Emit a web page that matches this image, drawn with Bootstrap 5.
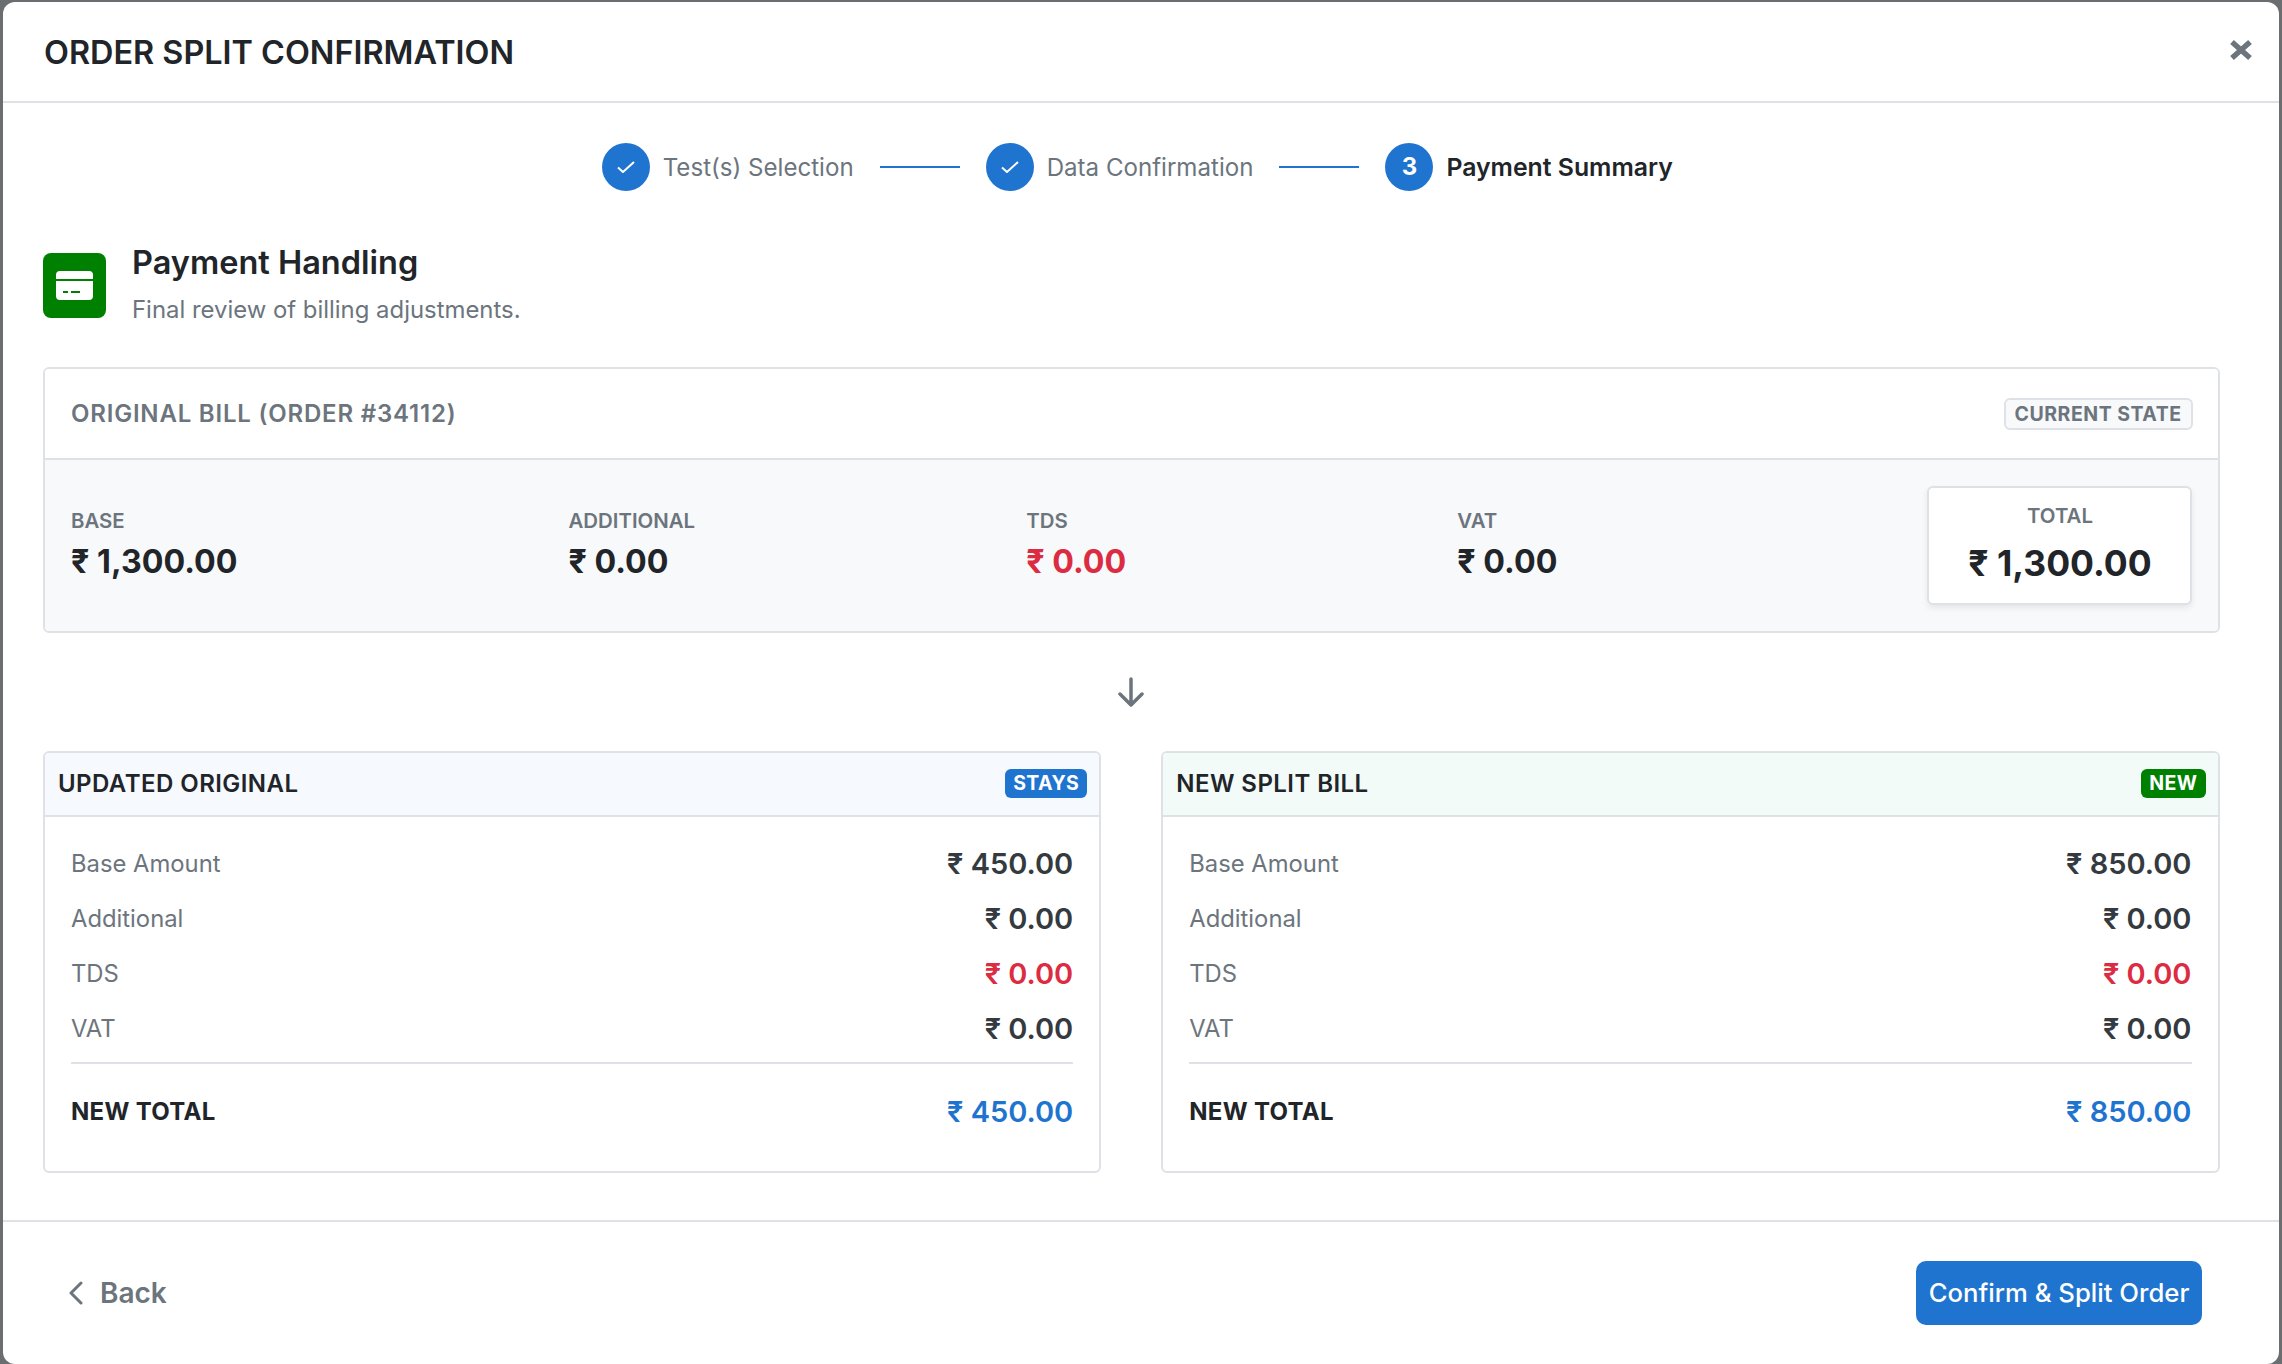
<!DOCTYPE html>
<html lang="en">
<head>
    <meta charset="UTF-8">
    <title>Order Split Confirmation</title>
    <link href="https://cdn.jsdelivr.net/npm/bootstrap@5.3.0/dist/css/bootstrap.min.css" rel="stylesheet">
    <style>
        html, body { height: 100%; }
        body { background: #6b6e71; font-family: Inter, "Liberation Sans", sans-serif; color: #212529; overflow: hidden; padding: 2px 3px 0; }
        .split-modal { height: 1362px; border: 0; border-radius: 12px; background: #fff; }
        .split-modal .modal-header { height: 101px; padding: 3px 26px 0 41px; border-bottom: 2px solid #dee2e6; }
        .split-title { font-size: 32.4px; font-weight: 600; margin: 0; }
        .split-x { width: 24px; height: 24px; color: #6c757d; margin-top: -6px; }
        .split-modal .modal-body { padding: 40px 59.5px 47px 40px; }

        .step-row { height: 48px; margin-bottom: 62px; padding-left: 12px; }
        .step-dot { width: 48px; height: 48px; border-radius: 50%; background: #1f74cf; color: #fff; font-size: 24px; font-weight: 700; }
        .step-text { font-size: 24.1px; color: #6c757d; margin: 2px 0 0 13px; }
        .step-now { color: #212529; font-weight: 600; font-size: 24.8px; }
        .step-line { width: 80px; height: 2px; background: #1f74cf; margin: 0 26px; }

        .pay-icon { width: 63px; height: 65px; background: #008000; border-radius: 8px; margin-right: 26px; }
        .pay-title { font-size: 32.5px; font-weight: 600; line-height: 38px; margin: -9px 0 0; }
        .pay-sub { font-size: 23.9px; color: #6c757d; line-height: 32px; margin: 12px 0 0; }
        .pay-head { height: 65px; margin-bottom: 49px; }

        .bill-card { border: 2px solid #dee2e6; border-radius: 6px; --bs-card-inner-border-radius: 4px; }
        .bill-card .card-header { border-bottom: 2px solid #dee2e6; }
        .orig-head { height: 91px; padding: 0 25px 0 26px; background: #fff; }
        .orig-name { font-size: 24px; font-weight: 600; letter-spacing: .8px; color: #6c757d; }
        .state-tag { font-size: 19.5px; font-weight: 700; letter-spacing: .5px; color: #6c757d; background: #f8f9fa; border: 2px solid #dee2e6; border-radius: 6px; padding: 0 9px; height: 32px; line-height: 28px; }
        .orig-body { height: 170.5px; padding: 0 25px 0 26px; background: #f8f9fa; border-radius: 0 0 4px 4px; }
        .fig-label { font-size: 20.4px; font-weight: 600; color: #6c757d; line-height: 24px; }
        .fig-value { font-size: 32.2px; font-weight: 700; line-height: 40px; margin-top: 9px; }
        .total-box { width: 265px; height: 119px; padding-bottom: 2px; background: #fff; border: 2px solid #dee2e6; border-radius: 6px; box-shadow: 0 3px 6px rgba(0,0,0,.08); margin-left: 39px; }
        .total-box .fig-value { font-size: 35.5px; margin-top: 16px; }

        .down-arrow { height: 118px; color: #6c757d; }
        .half-row { gap: 60px; }
        .half-row > .bill-card { flex: 1 1 0; height: 422px; }
        .half-head { height: 64px; padding: 0 12px 0 13px; }
        .head-blue { background: #f6f9fe; }
        .head-green { background: #f2fbf8; }
        .half-name { font-size: 24px; font-weight: 600; letter-spacing: .45px; }
        .half-tag { font-size: 19.5px; font-weight: 700; letter-spacing: .4px; border-radius: 6px; padding: 0 8px; height: 29px; line-height: 29px; color: #fff; }
        .tag-blue { background: #1f74cf; }
        .tag-green { background: #008000; }
        .half-body { padding: 20px 26px 0; }
        .line-row { height: 55px; }
        .line-name { font-size: 23.8px; color: #6c757d; }
        .line-amt { font-size: 29px; font-weight: 600; color: #343a40; }
        .line-sep { border-top: 2px solid #dee2e6; margin-top: 5.5px; padding-top: 25.5px; }
        .sep-name { font-size: 24px; font-weight: 700; letter-spacing: .3px; color: #212529; margin-top: 1.5px; }
        .sep-amt { font-size: 29px; font-weight: 600; color: #1f74cf; }
        .fig-red { color: #dc2c42; }

        .split-modal .modal-footer { flex: 1 1 auto; padding: 0 77px 0 65px; border-top: 2px solid #dee2e6; }
        .back-btn { font-size: 28px; font-weight: 600; color: #6c757d; gap: 17px; }
        .back-btn svg { width: 15px; height: 24px; }
        .go-btn { background: #1f74cf; border: 0; height: 64px; width: 286px; padding: 2px 0 0; font-size: 25.7px; font-weight: 500; border-radius: 10px; }
    </style>
</head>
<body>
    <div class="modal-content split-modal">
        <div class="modal-header d-flex justify-content-between align-items-center">
            <h5 class="split-title">ORDER SPLIT CONFIRMATION</h5>
            <svg class="split-x" viewBox="0 0 24 24" fill="none" stroke="currentColor" stroke-width="5.5"><path d="M3 4 21 20M21 4 3 20"/></svg>
        </div>

        <div class="modal-body flex-grow-0">
            <!-- steps -->
            <div class="step-row d-flex align-items-center justify-content-center">
                <span class="step-dot d-flex align-items-center justify-content-center">
                    <svg width="18" height="12" viewBox="0 0 18 12" fill="none" stroke="#fff" stroke-width="2"><path d="M1 6.5 6 11 17 1"/></svg>
                </span>
                <span class="step-text">Test(s) Selection</span>
                <span class="step-line"></span>
                <span class="step-dot d-flex align-items-center justify-content-center">
                    <svg width="18" height="12" viewBox="0 0 18 12" fill="none" stroke="#fff" stroke-width="2"><path d="M1 6.5 6 11 17 1"/></svg>
                </span>
                <span class="step-text">Data Confirmation</span>
                <span class="step-line"></span>
                <span class="step-dot d-flex align-items-center justify-content-center">3</span>
                <span class="step-text step-now">Payment Summary</span>
            </div>

            <div class="pay-head d-flex">
                <div class="pay-icon d-flex align-items-center justify-content-center">
                    <svg width="37" height="29" viewBox="0 0 37 29">
                        <path fill="#fff" d="M4 0h29a4 4 0 0 1 4 4v4H0V4a4 4 0 0 1 4-4ZM0 10h37v15a4 4 0 0 1-4 4H4a4 4 0 0 1-4-4Z"/>
                        <path stroke="#008000" stroke-width="2" d="M7 21h5M15 21h9"/>
                    </svg>
                </div>
                <div>
                    <h4 class="pay-title">Payment Handling</h4>
                    <p class="pay-sub">Final review of billing adjustments.</p>
                </div>
            </div>

            <!-- original bill -->
            <div class="card bill-card">
                <div class="card-header orig-head d-flex justify-content-between align-items-center">
                    <span class="orig-name">ORIGINAL BILL (ORDER #34112)</span>
                    <span class="state-tag">CURRENT STATE</span>
                </div>
                <div class="orig-body d-flex justify-content-between align-items-center">
                    <div>
                        <div class="fig-label">BASE</div>
                        <div class="fig-value">₹ 1,300.00</div>
                    </div>
                    <div>
                        <div class="fig-label">ADDITIONAL</div>
                        <div class="fig-value">₹ 0.00</div>
                    </div>
                    <div>
                        <div class="fig-label">TDS</div>
                        <div class="fig-value fig-red">₹ 0.00</div>
                    </div>
                    <div>
                        <div class="fig-label">VAT</div>
                        <div class="fig-value">₹ 0.00</div>
                    </div>
                    <div class="total-box d-flex flex-column align-items-center justify-content-center">
                        <div class="fig-label">TOTAL</div>
                        <div class="fig-value">₹ 1,300.00</div>
                    </div>
                </div>
            </div>

            <div class="down-arrow d-flex align-items-center justify-content-center">
                <svg width="26" height="30" viewBox="0 0 26 30" fill="none" stroke="currentColor" stroke-width="3.5" stroke-linecap="round" stroke-linejoin="round"><path d="M13 2v26M2 17l11 11 11-11"/></svg>
            </div>

            <div class="half-row d-flex">
                <!-- updated original -->
                <div class="card bill-card">
                    <div class="card-header half-head head-blue d-flex justify-content-between align-items-center">
                        <span class="half-name">UPDATED ORIGINAL</span>
                        <span class="half-tag tag-blue">STAYS</span>
                    </div>
                    <div class="half-body">
                        <div class="line-row d-flex justify-content-between align-items-center"><span class="line-name">Base Amount</span><span class="line-amt">₹ 450.00</span></div>
                        <div class="line-row d-flex justify-content-between align-items-center"><span class="line-name">Additional</span><span class="line-amt">₹ 0.00</span></div>
                        <div class="line-row d-flex justify-content-between align-items-center"><span class="line-name">TDS</span><span class="line-amt fig-red">₹ 0.00</span></div>
                        <div class="line-row d-flex justify-content-between align-items-center"><span class="line-name">VAT</span><span class="line-amt">₹ 0.00</span></div>
                        <div class="line-sep d-flex justify-content-between align-items-center"><span class="sep-name">NEW TOTAL</span><span class="sep-amt">₹ 450.00</span></div>
                    </div>
                </div>
                <!-- new split -->
                <div class="card bill-card">
                    <div class="card-header half-head head-green d-flex justify-content-between align-items-center">
                        <span class="half-name">NEW SPLIT BILL</span>
                        <span class="half-tag tag-green">NEW</span>
                    </div>
                    <div class="half-body">
                        <div class="line-row d-flex justify-content-between align-items-center"><span class="line-name">Base Amount</span><span class="line-amt">₹ 850.00</span></div>
                        <div class="line-row d-flex justify-content-between align-items-center"><span class="line-name">Additional</span><span class="line-amt">₹ 0.00</span></div>
                        <div class="line-row d-flex justify-content-between align-items-center"><span class="line-name">TDS</span><span class="line-amt fig-red">₹ 0.00</span></div>
                        <div class="line-row d-flex justify-content-between align-items-center"><span class="line-name">VAT</span><span class="line-amt">₹ 0.00</span></div>
                        <div class="line-sep d-flex justify-content-between align-items-center"><span class="sep-name">NEW TOTAL</span><span class="sep-amt">₹ 850.00</span></div>
                    </div>
                </div>
            </div>
        </div>

        <div class="modal-footer d-flex justify-content-between align-items-center mt-auto">
            <span class="back-btn d-flex align-items-center">
                <svg viewBox="0 0 15 24" fill="none" stroke="currentColor" stroke-width="3" stroke-linecap="round" stroke-linejoin="round"><path d="M13 2 3 12l10 10"/></svg>
                Back
            </span>
            <button type="button" class="btn btn-primary go-btn">Confirm &amp; Split Order</button>
        </div>
    </div>

    <script src="https://cdn.jsdelivr.net/npm/bootstrap@5.3.0/dist/js/bootstrap.bundle.min.js"></script>
</body>
</html>
